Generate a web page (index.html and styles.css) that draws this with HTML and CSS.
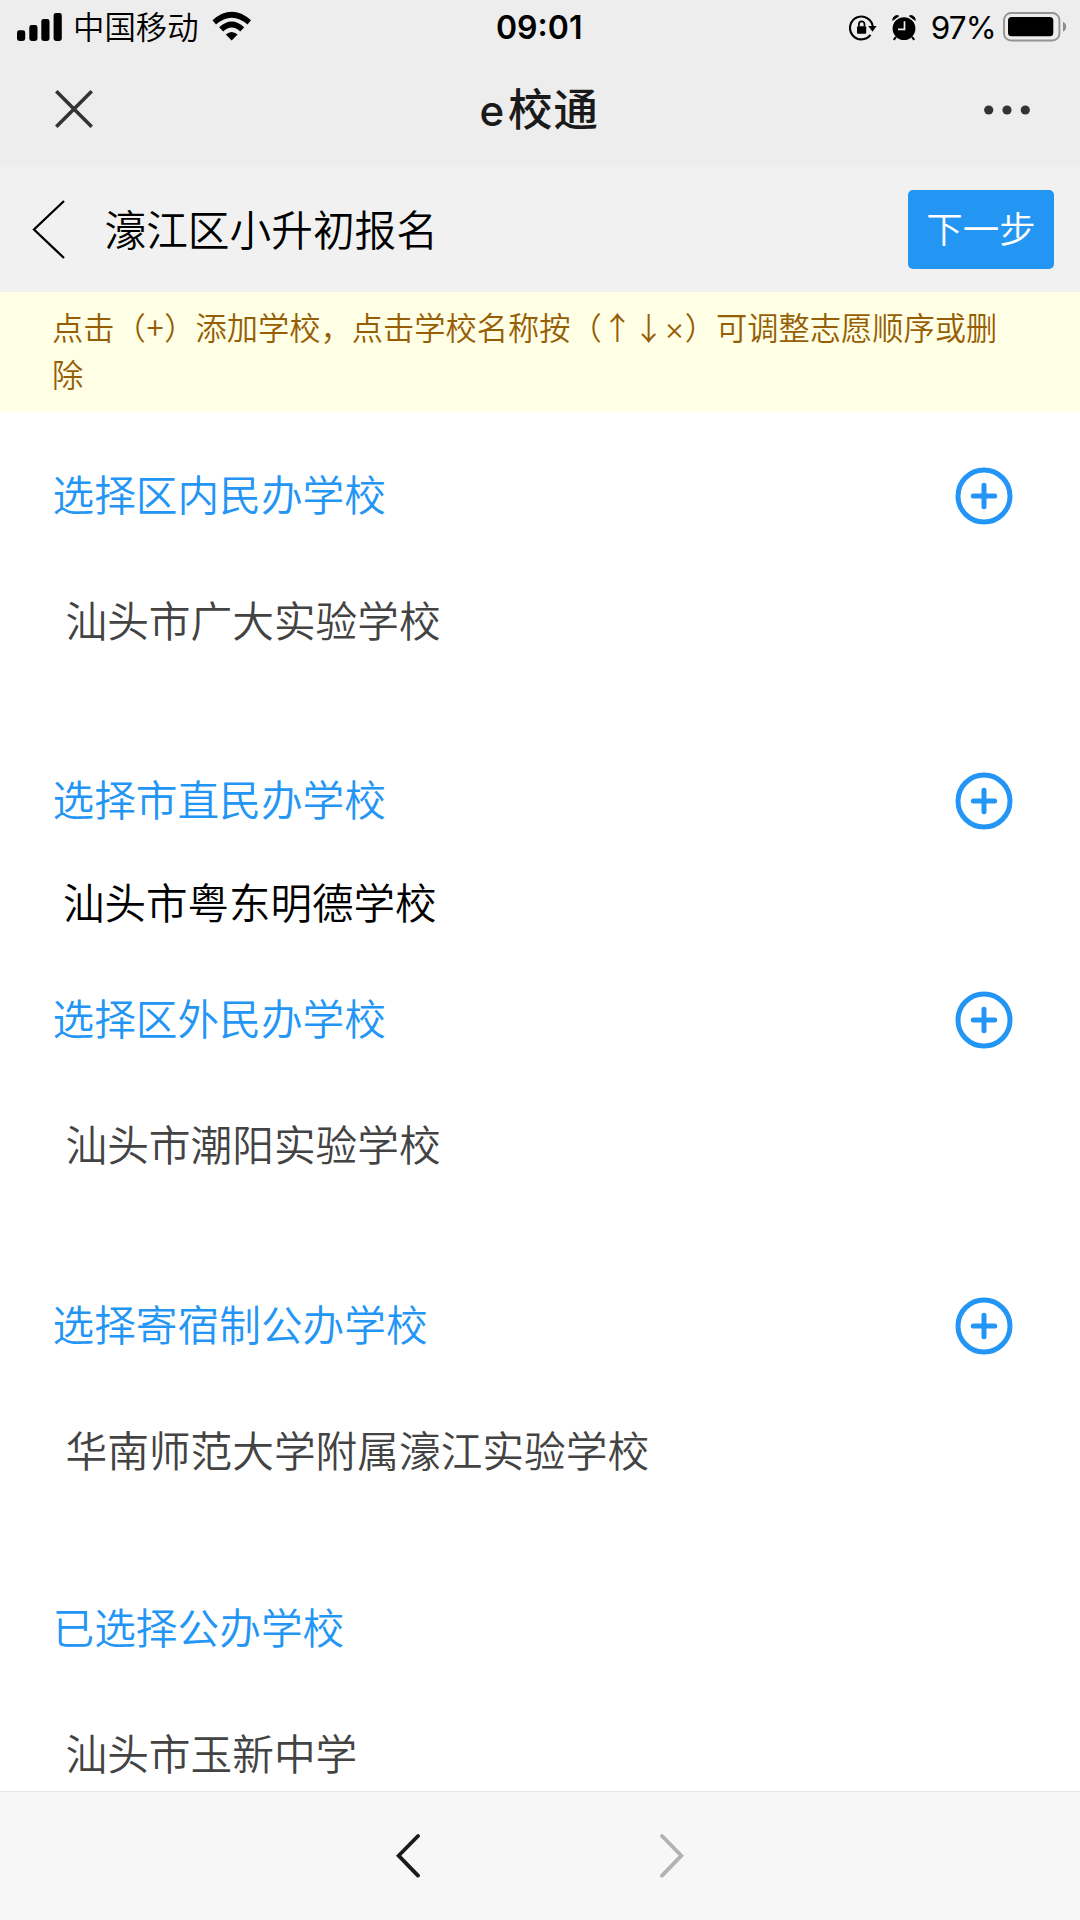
FILE: index.html
```html
<!DOCTYPE html>
<html lang="zh-CN">
<head>
<meta charset="utf-8">
<title>e校通</title>
<link rel="stylesheet" href="styles.css">
</head>
<body>
<div class="screen">
  <header class="top">
    <div class="status">
      <div class="status-left">
        <svg class="signal" width="45" height="28" viewBox="0 0 45 28"><rect x="0" y="17.3" width="8.2" height="10.7" rx="2.4"/><rect x="12.3" y="12" width="8.2" height="16" rx="2.4"/><rect x="24.3" y="6" width="8.2" height="22" rx="2.4"/><rect x="36.6" y="0" width="8.2" height="28" rx="2.4"/></svg>
        <span class="carrier">中国移动</span>
        <svg class="wifi" width="40" height="30" viewBox="0 0 40 30"><path d="M0.5 9.3Q19.7 -7.6 39 9.3L35.5 13.6Q19.7 0 4 13.6Z"/><path d="M7.2 16.2Q19.7 4.8 32.2 16.2L28.3 20.4Q19.7 12.8 11.2 20.4Z"/><path d="M13.8 23.5Q19.7 18.3 25.6 23.5L19.7 29.5Z"/></svg>
      </div>
      <div class="time">09:01</div>
      <div class="status-right">
        <svg class="lock" width="28" height="26" viewBox="0 0 28 26"><path d="M21.5 19.9A11.4 11.4 0 1 1 23.8 12" fill="none" stroke="#000" stroke-width="2.1"/><path d="M19.3 10.9H27.6L23.5 16.7Z"/><rect x="8" y="11.3" width="9.2" height="7.4" rx="1"/><path d="M9.9 11.6V9.2a2.8 2.8 0 0 1 5.6 0v2.4" fill="none" stroke="#000" stroke-width="1.7"/></svg>
        <svg class="alarm" width="24" height="26" viewBox="0 0 24 26"><circle cx="12" cy="13.6" r="11.4"/><path d="M0.8 5.3A4.2 4.2 0 0 1 6.7 1ZM23.2 5.3A4.2 4.2 0 0 0 17.3 1Z" stroke="#000" stroke-width="1"/><path d="M4 22L1.7 24.8M20 22L22.3 24.8" stroke="#000" stroke-width="2"/><path d="M12.5 6.3V14.3H6" fill="none" stroke="#ededed" stroke-width="1.7"/></svg>
        <span class="percent">97%</span>
        <svg class="battery" width="64" height="30" viewBox="0 0 64 30"><rect x="1" y="1" width="55.4" height="27.5" rx="7" fill="none" stroke="#949494" stroke-width="1.9"/><rect x="5" y="5" width="45.3" height="19.2" rx="3.5"/><path d="M60 9.8Q63.2 11.5 63.2 14.8T60 19.8Z" fill="#8c8c8c"/></svg>
      </div>
    </div>
    <div class="titlebar">
      <svg class="close" width="38" height="38" viewBox="0 0 38 38"><path d="M1.3 1.3L36.7 36.7M36.7 1.3L1.3 36.7"/></svg>
      <h1 class="title">e<span class="title-cjk">校通</span></h1>
      <svg class="more" width="47" height="10" viewBox="0 0 47 10"><circle cx="4.7" cy="5" r="4.6"/><circle cx="23" cy="5" r="4.6"/><circle cx="41.3" cy="5" r="4.6"/></svg>
    </div>
  </header>

  <nav class="page-nav">
    <svg class="page-back" width="34" height="62" viewBox="0 0 34 62"><path d="M32 2L2 30.5L32 59"/></svg>
    <h2 class="page-title">濠江区小升初报名</h2>
    <button class="next">下一步</button>
  </nav>

  <p class="notice">点击（<span class="plus-char">+</span>）添加学校，点击学校名称按（↑↓<span class="times-char">×</span>）可调整志愿顺序或删除</p>

  <main class="list">
    <section class="group">
      <div class="group-head"><h3>选择区内民办学校</h3><svg class="add" width="58" height="58" viewBox="0 0 58 58"><circle cx="29" cy="29" r="26"/><path d="M29 18.3V39.7M18.3 29H39.7"/></svg></div>
      <p class="school">汕头市广大实验学校</p>
    </section>
    <section class="group group-active">
      <div class="group-head"><h3>选择市直民办学校</h3><svg class="add" width="58" height="58" viewBox="0 0 58 58"><circle cx="29" cy="29" r="26"/><path d="M29 18.3V39.7M18.3 29H39.7"/></svg></div>
      <p class="school">汕头市粤东明德学校</p>
    </section>
    <section class="group">
      <div class="group-head"><h3>选择区外民办学校</h3><svg class="add" width="58" height="58" viewBox="0 0 58 58"><circle cx="29" cy="29" r="26"/><path d="M29 18.3V39.7M18.3 29H39.7"/></svg></div>
      <p class="school">汕头市潮阳实验学校</p>
    </section>
    <section class="group group-boarding">
      <div class="group-head"><h3>选择寄宿制公办学校</h3><svg class="add" width="58" height="58" viewBox="0 0 58 58"><circle cx="29" cy="29" r="26"/><path d="M29 18.3V39.7M18.3 29H39.7"/></svg></div>
      <p class="school">华南师范大学附属濠江实验学校</p>
    </section>
    <section class="group">
      <div class="group-head"><h3>已选择公办学校</h3></div>
      <p class="school">汕头市玉新中学</p>
    </section>
  </main>

  <footer class="browser-nav">
    <svg class="prev" width="24" height="46" viewBox="0 0 24 46"><path d="M22 3L2.6 22.7L22 42.6"/></svg>
    <svg class="forward" width="24" height="46" viewBox="0 0 24 46"><path d="M2 3L21.4 22.7L2 42.6"/></svg>
  </footer>
</div>
</body>
</html>
```
FILE: styles.css
```css
* { box-sizing: border-box; margin: 0; padding: 0; }

body {
  width: 1080px;
  height: 1920px;
  overflow: hidden;
  background: #fff;
  font-family: "Noto Sans CJK SC", sans-serif;
  font-weight: 350;
}

h1, h2, h3 { font-weight: inherit; }
svg { display: block; flex: none; }

.screen { height: 1920px; display: flex; flex-direction: column; }

.top { height: 167px; flex: none; background: #ededed; }

.status {
  height: 54px;
  padding: 0 13px 0 17px;
  display: grid;
  grid-template-columns: 479px auto 1fr;
  align-items: center;
}
.status-left, .status-right { display: flex; align-items: center; }
.status-right { justify-content: flex-end; }
.signal { margin-right: 11px; margin-top: -2px; }
.carrier { font-size: 31.4px; line-height: 50px; margin-top: -4px; }
.wifi { margin-left: 13px; margin-top: -4px; }
.time { font: 600 32px/54px Inter, sans-serif; padding-top: 1px; }
.lock { margin-right: 15px; margin-top: 1px; }
.alarm { margin-right: 15px; }
.percent { font: 400 31.5px/54px Inter, sans-serif; letter-spacing: -0.8px; margin-right: 7px; padding-top: 1px; }
.battery { margin-top: -2px; }

.titlebar {
  height: 113px;
  padding: 0 49px 3px 54.5px;
  display: grid;
  grid-template-columns: 1fr auto 1fr;
  align-items: center;
}
.close path { stroke: #333; stroke-width: 3.6; }
.title { font: 500 42px/60px Inter, sans-serif; color: #1a1a1a; margin-right: 7px; }
.title-cjk { font: 500 44.5px/60px "Noto Sans CJK SC", sans-serif; letter-spacing: 1px; margin-left: 4px; }
.more { justify-self: end; fill: #333; margin-top: 1px; }

.page-nav {
  height: 125px;
  flex: none;
  padding: 0 26px 0 32px;
  display: flex;
  align-items: center;
  background: #f1f1f1;
}
.page-back { fill: none; stroke: #000; stroke-width: 2.3; }
.page-title { margin-left: 38.5px; font-size: 41.7px; line-height: 60px; padding-bottom: 3px; }
.next {
  width: 146px;
  height: 79px;
  margin-left: auto;
  padding-bottom: 3px;
  border: 0;
  border-radius: 5px;
  background: #2395f3;
  color: #fff;
  font: 350 36.5px/76px "Noto Sans CJK SC", sans-serif;
}

.notice {
  height: 120px;
  flex: none;
  padding: 11px 68px 0 52px;
  background: #ffffe5;
  color: #965e05;
  font-size: 31.25px;
  line-height: 47px;
}
.plus-char, .times-char { display: inline-block; text-align: center; line-height: 1; }
.plus-char { width: 18.5px; }
.times-char { width: 20.5px; font-family: Inter, sans-serif; }

.list { flex: 1; min-height: 0; padding: 42px 67.5px 0 52.5px; overflow: hidden; }
.group { height: 305.3px; }
.group-head {
  height: 84px;
  display: flex;
  align-items: center;
  justify-content: space-between;
}
.group-head h3 { font-size: 41.7px; line-height: 78px; padding-bottom: 6px; color: #2396f5; }
.add { fill: none; stroke: #2396f5; stroke-width: 5; stroke-linecap: round; }
.school {
  margin-top: 39px;
  padding-left: 13px;
  color: #434343;
  font-size: 41.7px;
  line-height: 84px;
}
.group-active { height: 219px; }
.group-active .school { margin-top: 16px; padding-left: 10.5px; font-size: 41.5px; color: #000; }
.group-boarding { height: 303.3px; }

.browser-nav {
  height: 129px;
  flex: none;
  display: flex;
  justify-content: center;
  align-items: center;
  gap: 240px;
  border-top: 1px solid #e6e6e6;
  background: #f7f7f7;
}
.browser-nav svg { fill: none; stroke-width: 3.8; stroke-linecap: round; }
.prev { stroke: #1a1a1a; }
.forward { stroke: #b2b2b2; }
```
